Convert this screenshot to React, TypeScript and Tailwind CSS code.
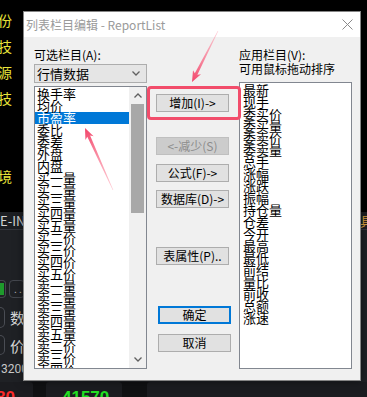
import React from 'react'

const cjk = "font-['Noto_Sans_CJK_SC','Noto_Sans',sans-serif]"

const leftItems = [
  '换手率', '均价', '市盈率', '委比', '委差', '外盘', '内盘',
  '买一量', '买二量', '买三量', '买四量', '买五量',
  '买二价', '买三价', '买四价', '买五价',
  '卖一量', '卖二量', '卖三量', '卖四量', '卖五量',
  '卖二价', '卖三价', '卖四价', '卖五价',
]

const rightItems = [
  '最新', '现手', '委买价', '委买量', '委卖价', '委卖量', '总手', '涨幅', '涨跌', '振幅',
  '持仓量', '仓差', '今开', '最高', '最低', '前结', '量比', '前收', '总额', '涨速',
]

// tapered arrow polygon, tail -> tip
function arrowPoints(tx: number, ty: number, hx: number, hy: number) {
  const dx = hx - tx
  const dy = hy - ty
  const len = Math.hypot(dx, dy)
  const ux = dx / len
  const uy = dy / len
  const nx = -uy
  const ny = ux
  const headLen = 11
  const bx = hx - ux * headLen
  const by = hy - uy * headLen
  const w0 = 0.6
  const w1 = 3
  const hw = 9
  const pts = [
    [tx + (nx * w0) / 2, ty + (ny * w0) / 2],
    [bx + ux * 2 + (nx * w1) / 2, by + uy * 2 + (ny * w1) / 2],
    [bx + (nx * hw) / 2, by + (ny * hw) / 2],
    [hx, hy],
    [bx - (nx * hw) / 2, by - (ny * hw) / 2],
    [bx + ux * 2 - (nx * w1) / 2, by + uy * 2 - (ny * w1) / 2],
    [tx - (nx * w0) / 2, ty - (ny * w0) / 2],
  ]
  return pts.map((p) => p.map((v) => v.toFixed(1)).join(',')).join(' ')
}

function Btn({ children, disabled, primary, mt }: { children: React.ReactNode; disabled?: boolean; primary?: boolean; mt: string }) {
  return (
    <div
      className={`${mt} flex h-[18px] w-[73px] items-center justify-center text-[12px] leading-none ${
        primary
          ? 'border-2 border-[#0078d7] bg-[#e1e1e1] text-black'
          : disabled
            ? 'border border-[#bfbfbf] bg-[#cccccc] text-[#8c8c8c]'
            : 'border border-[#adadad] bg-[#e1e1e1] text-black'
      }`}
    >
      {children}
    </div>
  )
}

function Chevron({ up }: { up?: boolean }) {
  return (
    <svg width="8" height="5" viewBox="0 0 8 5">
      <path d={up ? 'M0.5 4.5 L4 1 L7.5 4.5' : 'M0.5 0.5 L4 4 L7.5 0.5'} fill="none" stroke="#606060" strokeWidth="1.3" />
    </svg>
  )
}

export default function App() {
  return (
    <div className={`relative h-[397px] w-[367px] overflow-hidden bg-black ${cjk}`}>
      {/* trading app behind the dialog */}
      <div className="flex h-full flex-col">
        <div className="flex h-[212px] flex-col bg-black text-[14px] leading-[14px] text-[#e8e43a]">
          <span className="-ml-[2px] mt-[13px]">份</span>
          <span className="-ml-[2px] mt-[12px]">技</span>
          <span className="-ml-[2px] mt-[12px]">源</span>
          <span className="-ml-[2px] mt-[12px]">技</span>
          <span className="-ml-[2px] mt-[64px]">境</span>
        </div>
        <div className="flex h-[18px] items-center justify-between border-b border-[#34363c] bg-[#1c1e22]">
          <span className="text-[13px] leading-none text-[#d4d4d4]">E-IN</span>
          <span className="-mr-[6px] text-[13px] leading-none text-[#d9a040]">具</span>
        </div>
        <div className="flex flex-1 flex-col bg-[#1f2125]">
          <div className="mt-[50px] flex items-center gap-[3px]">
            <div className="flex h-[18px] w-[6px] items-center rounded-r-[4px] border border-l-0 border-[#44474e]">
              <div className="h-[12px] w-[4px] bg-[#1e9a2c]" />
            </div>
            <div className="flex h-[18px] w-[16px] items-center rounded-[4px] border border-[#44474e] pl-[4px] text-[10px] leading-none text-[#b0b0b0]">
              . .
            </div>
          </div>
          <div className="mt-[9px] flex items-center">
            <div className="h-[21px] w-[5px] rounded-r-[5px] border border-l-0 border-[#4a4d54]" />
            <span className="ml-[5px] text-[15px] leading-none text-[#d8d8d8]">数</span>
          </div>
          <div className="mt-[7px] flex items-center">
            <div className="h-[20px] w-[5px] rounded-r-[5px] border border-l-0 border-[#4a4d54]" />
            <span className="ml-[5px] text-[15px] leading-none text-[#d8d8d8]">价</span>
          </div>
          <span className="mt-[8px] pl-[1px] font-['Roboto',sans-serif] text-[12px] leading-[12px] text-[#c8c8c8]">3200</span>
        </div>
        <div className="flex h-[15px] bg-[#101113] font-['Liberation_Sans',sans-serif] text-[17px] font-bold leading-none">
          <div className="w-[33px] overflow-hidden rounded-tr-[3px] bg-[#1b1c20] pt-[7px] text-[#ff2a2a]">
            <span className="-ml-[4px]">80</span>
          </div>
          <div className="ml-[13px] w-[76px] overflow-hidden rounded-t-[3px] bg-[#1b1c20] pl-[16px] pt-[7px] text-[#22e022]">41570</div>
          <div className="ml-[25px] flex-1 rounded-tl-[3px] bg-[#1b1c20]" />
        </div>
      </div>

      {/* dialog */}
      <div className="absolute left-[23px] top-[11px] flex h-[370px] w-[338px] flex-col border border-[#858585] bg-[#f0f0f0] shadow-[0_0_8px_rgba(0,0,0,0.5)]">
        <div className="flex h-[25px] items-center justify-between bg-white pl-[2px] pr-[7px]">
          <span className="text-[12px] leading-none text-[#9a9a9a]">列表栏目编辑 - ReportList</span>
          <svg width="11" height="11" viewBox="0 0 11 11">
            <path d="M0.5 0.5 L10.5 10.5 M10.5 0.5 L0.5 10.5" stroke="#8a8a8a" strokeWidth="1" />
          </svg>
        </div>

        <div className="flex flex-1 pl-[10px] pt-[11px] text-black">
          {/* available columns */}
          <div className="flex w-[113px] flex-col">
            <span className="h-[14px] text-[12px] leading-[14px]">可选栏目(A):</span>
            <div className="mt-[2px] flex h-[19px] items-center justify-between border border-[#adadad] bg-[#e5e5e5] pl-[2px] pr-[6px]">
              <span className="text-[13px] leading-none">行情数据</span>
              <Chevron />
            </div>
            <div className="mt-[3px] flex h-[283px] border border-[#828790] bg-white">
              <div className="flex-1 overflow-hidden pt-[1px]">
                {leftItems.map((t, i) => (
                  <div
                    key={t}
                    className={`h-[12px] whitespace-nowrap pl-[2px] text-[13px] leading-[12px] ${
                      i === 2 ? 'bg-[#0078d7] text-white' : 'text-black'
                    }`}
                  >
                    {t}
                  </div>
                ))}
              </div>
              <div className="flex w-[17px] flex-col bg-[#f0f0f0]">
                <div className="flex h-[17px] items-center justify-center">
                  <Chevron up />
                </div>
                <div className="mx-auto h-[109px] w-[13px] bg-[#a8a8a8]" />
                <div className="flex-1" />
                <div className="flex h-[17px] items-center justify-center">
                  <Chevron />
                </div>
              </div>
            </div>
          </div>

          {/* buttons */}
          <div className="ml-[9px] flex w-[75px] flex-col">
            <Btn mt="mt-[46px]">增加(I)-&gt;</Btn>
            <Btn mt="mt-[25px]" disabled>&lt;-减少(S)</Btn>
            <Btn mt="mt-[9px]">公式(F)-&gt;</Btn>
            <Btn mt="mt-[8px]">数据库(D)-&gt;</Btn>
            <Btn mt="mt-[39px]">表属性(P)..</Btn>
            <div className="ml-[2px]">
              <Btn mt="mt-[41px]" primary>确定</Btn>
              <Btn mt="mt-[10px]">取消</Btn>
            </div>
          </div>

          {/* applied columns */}
          <div className="ml-[8px] flex w-[113px] flex-col">
            <span className="h-[14px] text-[12px] leading-[14px]">应用栏目(V):</span>
            <span className="h-[14px] text-[12px] leading-[14px]">可用鼠标拖动排序</span>
            <div className="mt-[6px] h-[287px] overflow-hidden border border-[#828790] bg-white pt-[1px]">
              {rightItems.map((t) => (
                <div key={t} className="h-[12px] whitespace-nowrap pl-[3px] text-[13px] leading-[12px]">
                  {t}
                </div>
              ))}
            </div>
          </div>
        </div>
      </div>

      {/* annotation: highlight box */}
      <div className="pointer-events-none absolute left-[147px] top-[86px] h-[34px] w-[94px] rounded-[4px] border-[3px] border-[#f24d6b]" />

      {/* annotation: arrows */}
      <svg className="pointer-events-none absolute inset-0" width="367" height="397" viewBox="0 0 367 397">
        <defs>
          <linearGradient id="a1" gradientUnits="userSpaceOnUse" x1="218" y1="31" x2="192" y2="82">
            <stop offset="0" stopColor="#ff9aac" stopOpacity="0.5" />
            <stop offset="1" stopColor="#f2456a" />
          </linearGradient>
          <linearGradient id="a2" gradientUnits="userSpaceOnUse" x1="113" y1="190" x2="85" y2="128">
            <stop offset="0" stopColor="#ff9aac" stopOpacity="0.5" />
            <stop offset="1" stopColor="#f2456a" />
          </linearGradient>
        </defs>
        <polygon points={arrowPoints(218, 31, 192, 82)} fill="url(#a1)" />
        <polygon points={arrowPoints(113, 190, 85, 128)} fill="url(#a2)" />
      </svg>
    </div>
  )
}
